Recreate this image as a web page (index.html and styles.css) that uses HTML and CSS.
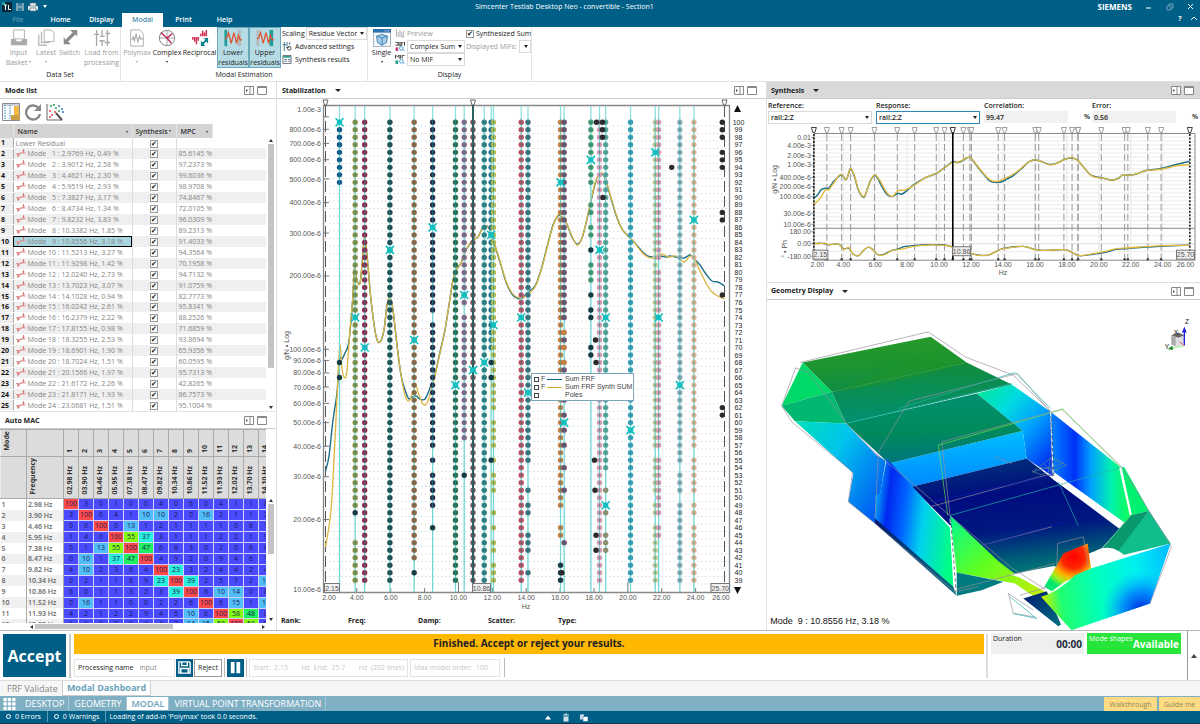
FILE: index.html
```html
<!DOCTYPE html>
<html lang="en">
<head>
<meta charset="utf-8">
<title>Simcenter Testlab Desktop Neo</title>
<link rel="stylesheet" href="styles.css">
</head>
<body>
<svg class="defs" aria-hidden="true">
  <symbol id="i-dock" viewBox="0 0 10 9"><path d="M.5.5h9v8h-9zM6 .5v8M6 .5h3.500v8H6" fill="#fff" stroke="#888" /><path d="M2 3v3l2-1.500z" fill="#555"/></symbol>
  <symbol id="i-max" viewBox="0 0 10 9"><path d="M.5.5h9v8h-9z" fill="#fff" stroke="#888"/><path d="M.5 1.500h9" stroke="#888"/></symbol>
  <symbol id="i-mode" viewBox="0 0 10 8"><path d="M0 4h5v1H0zM1 5h3v2H1zM5 3.500h5v1H5zM6.500 1h2v2.500h-2z" fill="#e9a3a3"/><path d="M2 4v4M7.500 0v4M5 5V3" fill="none" stroke="#c87474" stroke-width=".8"/></symbol>
  <symbol id="i-resid" viewBox="0 0 20 20"><path d="M1 11l2-1 2-6 3 12 3-12 3 12 2-9 2 5h2" fill="none" stroke="#e0532f" stroke-width="1.400"/></symbol>
</svg>

<header class="title-area">
  <div class="title-row">
    <div class="quick">
      <svg class="ico-10" viewBox="0 0 10 10"><path d="M0 0h10v10H0z" fill="#06283a"/><path d="M0 0h3v3H0z" fill="#17a39b"/><path d="M2 3h3M3.500 3v5M6.500 3v4.500H9" stroke="#fff" fill="none"/></svg>
      <svg class="ico-10" viewBox="0 0 10 10"><path d="M1 1h8v8H1z" fill="#7aa5b8"/><path d="M3 1h4v3H3zM3 6h4v3H3z" fill="#3b7d9c"/></svg>
      <svg class="ico-10" viewBox="0 0 10 10"><path d="M0 4h10v4H0z" fill="#dce8ee"/><path d="M2 1h6v3H2zM2 6h6v3H2z" fill="#eee" stroke="#5f7987" stroke-width=".7"/></svg>
      <span class="caret-white"></span>
    </div>
    <h1 class="title">Simcenter Testlab Desktop Neo - convertible - Section1</h1>
    <div class="window-tools"><b class="brand">SIEMENS</b>
      <button class="win" aria-label="Minimize"><svg viewBox="0 0 8 8"><path d="M1 5h5" stroke="#fff"/></svg></button>
      <button class="win" aria-label="Restore"><svg viewBox="0 0 8 8"><path d="M1 3h4v4H1zM3 3V1h4v4H5" stroke="#6fa3bd" fill="none"/></svg></button>
      <button class="win" aria-label="Close"><svg viewBox="0 0 8 8"><path d="M1 1l5 5M6 1L1 6" stroke="#fff"/></svg></button>
    </div>
  </div>
  <nav class="tab-row">
    <button class="tab tab-dim">File</button><button class="tab">Home</button><button class="tab">Display</button><button class="tab tab-active">Modal</button><button class="tab">Print</button><button class="tab">Help</button>
    <div class="help-tools"><button class="win" aria-label="Help">?</button><button class="win" aria-label="Collapse"><svg viewBox="0 0 8 8"><path d="M1 5l3-3 3 3" stroke="#fff" fill="none"/></svg></button></div>
  </nav>
</header>

<section class="ribbon">
  <div class="group">
    <div class="items">
      <button class="tool w-36 dim"><svg viewBox="0 0 20 20"><path d="M4 1h12v10H4z" fill="#fff" stroke="#aaa"/><path d="M1 11h5c1 4 7 4 8 0h5v7H1z" fill="#aaa"/></svg>Input<br>Basket <i class="car"></i></button>
      <button class="tool w-20 dim"><svg viewBox="0 0 20 20"><path d="M2 6v12h9M5 3v12h9" fill="none" stroke="#bbb" stroke-width="1.500"/><path d="M8 1h7l4 3v10H8z" fill="#fff" stroke="#aaa"/></svg>Latest<br><i class="car"></i></button>
      <button class="tool w-27 dim"><svg viewBox="0 0 20 20"><path d="M3 9v8h8l-3-3 8-8 2 2V1h-8l3 3-8 8z" fill="#8c8c8c"/></svg>Switch</button>
      <button class="tool w-37 dim"><svg viewBox="0 0 20 20"><path d="M4 1v18M10 1v6M10 14v5M16 1v18M1 6h6M7 13h6M13 15h6M8 8h5M14 5h5" stroke="#aaa" stroke-width="1.500"/></svg>Load from<br>processing</button>
    </div><div class="group-name">Data Set</div>
  </div>
  <div class="group">
    <div class="items">
      <button class="tool w-30 dim"><svg viewBox="0 0 20 20"><path d="M3 1h10l4 4v14H3z" fill="#fff" stroke="#aaa"/><path d="M4 12l2-3 1 4 2-7 2 8 2-6 1 3h3" fill="none" stroke="#aaa" stroke-width="1.300"/></svg>Polymax<br><i class="car"></i></button>
      <button class="tool w-30"><svg viewBox="0 0 20 20"><circle cx="10" cy="10" r="8.500" fill="#fff" stroke="#777"/><path d="M10 1v18M1 10h18" stroke="#999"/><path d="M10 10L3 4M10 10l6-5M10 10l5 6" stroke="#c21e56" stroke-width="1.500"/></svg>Complex<br><i class="car"></i></button>
      <button class="tool w-35"><svg viewBox="0 0 20 20"><path d="M2 12V9M4 14V9M6 17V9M8 13V9M11 8V5M13 8V2M15 8V4M17 8V1" stroke="#d02c50" stroke-width="1.600"/><path d="M11 19v-6l2 2 3-3-2-2h5v6l-2-2-3 3 2 2z" fill="#087f8c"/></svg>Reciprocal</button>
      <button class="tool w-32 on"><svg viewBox="0 0 20 20"><path d="M2 1v18" stroke="#1c9d98" stroke-width="3"/><path d="M17 1v18" stroke="#b2bcc0" stroke-width="4"/><use href="#i-resid"/></svg>Lower<br>residuals</button>
      <button class="tool w-32 on"><svg viewBox="0 0 20 20"><path d="M2 1v18" stroke="#b2bcc0" stroke-width="3"/><path d="M17 1v18" stroke="#1c9d98" stroke-width="4"/><use href="#i-resid"/></svg>Upper<br>residuals</button>
      <div class="stack">
        <label class="line line-tight">Scaling <span class="drop drop-grow"><select><option>Residue Vector</option></select></span></label>
        <button class="line"><svg class="ico-9" viewBox="0 0 10 10"><path d="M2 0v10M5 0v5M8 0v3M0 3h4M4 6h3" stroke="#356c83"/><circle cx="7.500" cy="7" r="2" fill="none" stroke="#333"/></svg>Advanced settings</button>
        <button class="line"><svg class="ico-9" viewBox="0 0 10 10"><path d="M.5.5h9v9h-9z" fill="#fff" stroke="#667"/><path d="M1 1h8v2H1z" fill="#2b9d90"/><path d="M2 5h3M6 5h3M2 7h3M6 7h3" stroke="#678"/></svg>Synthesis results</button>
      </div>
    </div><div class="group-name">Modal Estimation</div>
  </div>
  <div class="group">
    <div class="items">
      <button class="tool w-24"><svg viewBox="0 0 20 20"><path d="M.5.5h19v19H.5z" fill="#f4f7fa" stroke="#9ab"/><path d="M0 0h20v4H0z" fill="#2e6fae"/><path d="M13 2h1M15 2h1M17 2h1" stroke="#fff"/><path d="M10 6l6 2-1 7-5 3-5-3-1-7z" fill="#a5cdec" stroke="#3c79ac"/><path d="M4 8l6 2 6-2M10 10v8" fill="none" stroke="#3c79ac"/></svg>Single<br><i class="car"></i></button>
      <div class="stack stack-disp">
        <button class="line dim"><svg class="ico-9" viewBox="0 0 10 10"><path d="M1 0v9M3 3v6M5 1v8M7 3v6h2V2" fill="none" stroke="#aaa"/></svg>Preview</button>
        <label class="line"><svg class="ico-9" viewBox="0 0 10 10"><path d="M0 .5h3v3H0M4 0v4h2V0M7 4V0h3v4" fill="none" stroke="#333"/><path d="M0 6h3v4H0z" fill="#c2447a"/><circle cx="6.500" cy="7" r="2" fill="none" stroke="#39c"/><path d="M8 8l2 2" stroke="#39c"/></svg><span class="drop drop-grow"><select aria-label="Sum"><option>Complex Sum</option></select></span></label>
        <label class="line"><svg class="ico-9" viewBox="0 0 10 10"><path d="M0 4V0l2 2 2-2v4M5.500 0v4M7.500 4V.5H10" fill="none" stroke="#333"/><path d="M0 6h3v4H0z" fill="#2b9d90"/><circle cx="6.500" cy="7" r="2" fill="none" stroke="#39c"/><path d="M8 8l2 2" stroke="#39c"/></svg><span class="drop drop-grow"><select aria-label="MIF"><option>No MIF</option></select></span></label>
      </div>
      <div class="stack stack-sum">
        <label class="line"><input type="checkbox" class="check" checked> Synthesized Sum</label>
        <label class="line dim">Displayed MIFs: <span class="drop drop-tiny"><select><option></option></select></span></label>
      </div>
    </div><div class="group-name">Display</div>
  </div>
</section>

<main class="main">
  <div class="col col-left">
    <section class="panel modes">
      <header class="bar"><h2>Mode list</h2><span class="bar-tools"><svg><use href="#i-dock"/></svg><svg><use href="#i-max"/></svg></span></header>
      <div class="mode-tools">
        <button aria-label="Columns"><svg viewBox="0 0 18 18"><path d="M.5.5h17v17H.5z" fill="#fff" stroke="#889"/><path d="M1 1h16v2H1z" fill="#cdd3d8"/><path d="M3 2v14M8 2v14" stroke="#2f7ac0" stroke-dasharray="1.500 1"/><path d="M12 3h5v9h-5z" fill="#f4b942"/><path d="M9 12h9v5H9z" fill="#caa04a"/></svg></button>
        <button aria-label="Refresh"><svg viewBox="0 0 18 18"><path d="M14.500 5A7 7 0 1 0 16 11" fill="none" stroke="#888" stroke-width="2.400"/><path d="M17 1v7h-7z" fill="#888"/></svg></button>
        <button aria-label="Select poles"><svg viewBox="0 0 18 18"><path d="M1 1v16h15" fill="none" stroke="#666"/><g fill="#2a9d55"><circle cx="5" cy="3" r="1"/><circle cx="8" cy="2" r="1"/><circle cx="10" cy="5" r="1"/><circle cx="13" cy="8" r="1"/></g><g fill="#d64045"><circle cx="4" cy="8" r="1"/><circle cx="6" cy="12" r="1"/><circle cx="9" cy="9" r="1"/><circle cx="4" cy="14" r="1"/></g><g fill="#2f6fc0"><circle cx="13" cy="3" r="1"/><circle cx="16" cy="6" r="1"/><circle cx="17" cy="9" r="1"/></g><path d="M10 10l6 7" stroke="#555" stroke-width="2"/></svg></button>
      </div>
      <div class="scroller">
        <div class="clip">
          <table class="mode-table">
            <colgroup><col class="c-num"><col class="c-name"><col class="c-syn"><col class="c-mpc"><col></colgroup>
            <thead><tr><th></th><th>Name<i class="car car-r"></i></th><th>Synthesis <i class="car"></i></th><th>MPC<i class="car car-r"></i></th><td></td></tr></thead>
            <tbody id="modes"></tbody>
          </table>
        </div>
        <div class="vbar vbar-modes"><i class="up"></i><i class="thumb thumb-modes"></i><i class="down"></i></div>
      </div>
    </section>
    <section class="panel mac">
      <header class="bar"><h2>Auto MAC</h2><span class="bar-tools"><svg><use href="#i-dock"/></svg><svg><use href="#i-max"/></svg></span></header>
      <div class="scroller">
        <div class="clip">
          <table class="mac-table"><colgroup id="macCols"><col class="c-mode"><col class="c-freq"></colgroup><thead id="macHead"></thead><tbody id="macBody"></tbody></table>
        </div>
        <div class="vbar vbar-mac"><i class="up"></i><i class="thumb thumb-mac"></i><i class="down"></i></div>
      </div>
      <div class="hbar"><i class="left"></i><i class="hthumb"></i><i class="right"></i></div>
    </section>
  </div>

  <section class="col panel stab">
    <header class="bar"><h2>Stabilization</h2><i class="car car-big"></i><span class="bar-tools"><svg><use href="#i-dock"/></svg><svg><use href="#i-max"/></svg></span></header>
    <div class="chart-box">
      <svg class="chart" id="stab" viewBox="277 99 489 514" role="img" aria-label="Stabilization diagram"></svg>
      <div class="legend">
        <label><input type="checkbox" class="box"><span>F</span><i class="key key-blue"></i><span>Sum FRF</span></label>
        <label><input type="checkbox" class="box"><span>F</span><i class="key key-gold"></i><span>Sum FRF Synth SUM</span></label>
        <label><input type="checkbox" class="box"><span></span><i class="key"></i><span>Poles</span></label>
      </div>
    </div>
    <div class="readout"><b>Rank:</b><b>Freq:</b><b>Damp:</b><b>Scatter:</b><b>Type:</b></div>
  </section>

  <div class="col col-right">
    <section class="panel synth">
      <header class="bar bar-grey"><h2>Synthesis</h2><i class="car car-big"></i><span class="bar-tools"><svg><use href="#i-dock"/></svg><svg><use href="#i-max"/></svg></span></header>
      <div class="fields">
        <label>Reference:<span class="drop"><select><option>rail:2:Z</option></select></span></label>
        <label>Response:<span class="drop drop-focus"><select><option>rail:2:Z</option></select></span></label>
        <label>Correlation:<span class="with-unit"><input readonly value="99.47"><span>%</span></span></label>
        <label>Error:<span class="with-unit"><input readonly value="0.56"><span>%</span></span></label>
      </div>
      <svg class="chart" id="synth" viewBox="767 125 433 157" role="img" aria-label="Synthesis chart"></svg>
    </section>
    <section class="panel geo">
      <header class="bar"><h2>Geometry Display</h2><i class="car car-big"></i><span class="bar-tools"><svg><use href="#i-dock"/></svg><svg><use href="#i-max"/></svg></span></header>
      <svg class="chart" viewBox="6 45 1299 990" role="img" aria-label="Mode shape">
        <defs>
          <linearGradient id="g1" x1=".4" y1="0" x2=".55" y2="1"><stop offset="0" stop-color="#289a28"/><stop offset=".5" stop-color="#1c9430"/><stop offset="1" stop-color="#0c8c48"/></linearGradient>
          <linearGradient id="g2" x1=".5" y1="0" x2=".6" y2="1"><stop offset="0" stop-color="#128c3c"/><stop offset="1" stop-color="#009074"/></linearGradient>
          <linearGradient id="g3" x1=".5" y1="0" x2=".55" y2="1"><stop offset="0" stop-color="#009070"/><stop offset=".55" stop-color="#008a5c"/><stop offset="1" stop-color="#007480"/></linearGradient>
          <linearGradient id="g4" x1="0" y1="0" x2="1" y2=".7"><stop offset="0" stop-color="#00e0b8"/><stop offset=".45" stop-color="#00c4ec"/><stop offset="1" stop-color="#0060f4"/></linearGradient>
          <linearGradient id="g5" x1="0" y1="0" x2=".9" y2=".9"><stop offset="0" stop-color="#00e890"/><stop offset=".35" stop-color="#00dce0"/><stop offset=".65" stop-color="#00a0ff"/><stop offset="1" stop-color="#0030f0"/></linearGradient>
          <linearGradient id="g6" x1="0" y1="0" x2=".1" y2="1"><stop offset="0" stop-color="#00c4ff"/><stop offset="1" stop-color="#0088ff"/></linearGradient>
          <linearGradient id="g7" x1="0" y1=".4" x2="1" y2=".6"><stop offset="0" stop-color="#00a0f8"/><stop offset=".15" stop-color="#0028f0"/><stop offset=".35" stop-color="#0060ff"/><stop offset=".6" stop-color="#00d0f0"/><stop offset="1" stop-color="#00ff80"/></linearGradient>
          <linearGradient id="g8" x1=".4" y1="0" x2=".6" y2="1"><stop offset="0" stop-color="#003078"/><stop offset=".3" stop-color="#000c80"/><stop offset=".6" stop-color="#001880"/><stop offset=".85" stop-color="#006078"/><stop offset="1" stop-color="#008078"/></linearGradient>
          <linearGradient id="g9" x1="0" y1=".4" x2="1" y2=".4"><stop offset="0" stop-color="#0088ff"/><stop offset=".3" stop-color="#0030f8"/><stop offset=".5" stop-color="#00a0ff"/><stop offset=".75" stop-color="#00f0b0"/><stop offset="1" stop-color="#10ff50"/></linearGradient>
          <linearGradient id="g10" x1="0" y1="0" x2="1" y2="1"><stop offset="0" stop-color="#00f890"/><stop offset=".4" stop-color="#60ff20"/><stop offset="1" stop-color="#f4e400"/></linearGradient>
          <linearGradient id="g11" x1="0" y1=".5" x2="1" y2=".4"><stop offset="0" stop-color="#c8f000"/><stop offset=".14" stop-color="#20ff70"/><stop offset=".45" stop-color="#00ffc0"/><stop offset=".75" stop-color="#00f0f0"/><stop offset="1" stop-color="#00c0ff"/></linearGradient>
          <radialGradient id="g12" cx="1130" cy="975" r="120" gradientUnits="userSpaceOnUse"><stop offset="0" stop-color="#0020e0"/><stop offset=".5" stop-color="#0080ff" stop-opacity=".8"/><stop offset="1" stop-color="#00c0ff" stop-opacity="0"/></radialGradient>
          <radialGradient id="g13" cx="925" cy="815" r="100" gradientUnits="userSpaceOnUse"><stop offset="0" stop-color="#ff0000"/><stop offset=".35" stop-color="#ff2800"/><stop offset=".6" stop-color="#ffb000"/><stop offset=".8" stop-color="#a0f020"/><stop offset="1" stop-color="#00e870"/></radialGradient>
          <linearGradient id="g14" x1="0" y1="0" x2="1" y2="1"><stop offset="0" stop-color="#001870"/><stop offset="1" stop-color="#007080"/></linearGradient>
        </defs>
        <path d="M740 298L857 380L865 575L785 520L773 437L635 325z" fill="url(#g5)"/>
        <path d="M372 535L773 437L785 520L440 605z" fill="url(#g6)"/>
        <path d="M440 605L785 520L868 585L1065 728L1010 790L870 845L735 872L555 720z" fill="url(#g8)"/>
        <path d="M243 415L635 325L773 437L372 535z" fill="url(#g3)"/>
        <path d="M113 232L497 155L605 232L200 320z" fill="url(#g1)"/>
        <path d="M200 320L605 232L740 298L243 415z" fill="url(#g2)"/>
        <path d="M200 320C360 300 480 270 605 232L497 200C400 250 280 290 200 320z" fill="#209428" opacity=".5"/>
        <path d="M113 232L200 320L50 362z" fill="#00d868"/>
        <path d="M50 362L200 320L243 415L90 408z" fill="#00b870"/>
        <path d="M90 408L243 415L335 510L362 525L345 630L330 715L250 650L265 565z" fill="url(#g4)"/>
        <path d="M365 520L555 728L565 905L330 705L332 630L345 625z" fill="url(#g7)"/>
        <path d="M330 700L565 905L575 932L330 715z" fill="url(#g14)"/>
        <path d="M857 380L1065 545L1098 690L1070 722L865 560z" fill="url(#g9)"/>
        <path d="M865 560L1078 712L1062 730L865 582z" fill="#fff"/>
        <path d="M1065 545L1078 546L1152 677L1100 690z" fill="#00f070"/>
        <path d="M1062 547L1070 547L1100 686L1094 690z" fill="#fff"/>
        <path d="M1098 690L1152 677L1065 800L1012 790z" fill="#08986c"/>
        <path d="M1152 677L1217 775L1065 812L1060 797z" fill="#10bd8c"/>
        <path d="M975 815Q1000 780 1045 790Q1080 805 1085 822L978 850z" fill="#fff"/>
        <path d="M555 690L700 828L765 878L850 925L860 955L885 995L830 950L750 895L575 862z" fill="url(#g10)"/>
        <path d="M575 862L715 890L650 915L575 932z" fill="#007c80"/>
        <path d="M775 940L845 918L888 1018L880 1023z" fill="url(#g14)"/>
        <path d="M735 868L870 842L835 908L790 885z" fill="#fff"/>
        <path d="M838 905L895 805L968 775L978 850L900 890L860 918z" fill="url(#g13)"/>
        <path d="M828 935Q880 920 930 870L978 850L1217 775L1155 955L920 1035L878 990z" fill="url(#g11)"/>
        <path d="M1217 775L1155 955L920 1035L1000 900z" fill="url(#g12)"/>
        <g fill="none" stroke="#998c9c" stroke-width="2">
          <path d="M105 232L490 140L600 215L745 270L857 378M50 362L92 248L130 262L245 415L335 508L420 575L555 692L740 848L840 912M50 362L82 412L263 560L250 650L330 715L570 920L640 905"/>
          <path d="M335 510L432 348L758 265L857 380L862 575M330 700L340 510M555 690L530 470L890 372L1070 545L1152 677L1219 785L1155 955M495 665L860 565M650 780L860 725M875 850L878 775L955 755L970 845M575 912L870 835M730 925L805 975M730 925L745 985L810 995M690 515L740 535M765 930L850 905"/>
        </g>
        <g fill="none" stroke="#20b0a8" stroke-width="2">
          <path d="M243 415L740 295M400 370L750 262L857 370M558 690L1065 548M880 590L940 722M735 935L815 1000L745 985"/>
          <path d="M802 560L862 515L905 540L830 568L802 560L895 535L855 520L850 560M820 545L880 555M835 535L870 565" stroke="#508898"/>
          <path d="M520 480L895 372M520 480L548 690M892 370L1065 545" stroke="#70e048"/>
          <path d="M500 650L860 570M650 780L900 710" stroke="#1020b0"/>
        </g>
        <path d="M555 700L575 930M857 380L865 578" stroke="#fff" stroke-width="3" stroke-dasharray="14 5"/>
        <path d="M557 700L573 920M860 400L866 575" stroke="#234" stroke-width="2" stroke-dasharray="10 8"/>
        <g><path d="M1219 150L1240 142L1258 150L1258 176L1240 185L1219 178z" fill="#ddd"/><path d="M1219 150L1240 142L1258 150L1240 158z" fill="#666"/><path d="M1219 150L1219 178L1232 184L1232 156z" fill="#aaa"/><path d="M1258 180V135" stroke="#2020e0" stroke-width="4"/><path d="M1251 142L1258 124L1265 142z" fill="#2020e0"/><path d="M1258 182L1215 190" stroke="#60e060" stroke-width="2"/><path d="M1222 182L1208 192L1224 194z" fill="#108020"/><path d="M1258 182L1244 170" stroke="#e02020" stroke-width="2"/></g>
        <g class="axis-names"><text x="1260" y="116">Z</text><text x="1226" y="148">X</text><text x="1199" y="192">Y</text></g>
        <text class="shape-name" x="16" y="1016" xml:space="preserve">Mode  9 : 10.8556 Hz, 3.18 %</text>
      </svg>
    </section>
  </div>
</main>

<section class="actions">
  <button class="accept">Accept</button>
  <div class="work">
    <div class="banner">Finished. Accept or reject your results.</div>
    <div class="params">
      <label class="framed framed-name">Processing name <input value="input"></label>
      <button class="square" aria-label="Save"><svg viewBox="0 0 16 16"><path d="M2 2h11l1 1v11H2z" fill="none" stroke="#fff" stroke-width="1.500"/><path d="M5 2v4h6V2M4 14V9h8v5" fill="none" stroke="#fff" stroke-width="1.500"/></svg></button>
      <button class="reject">Reject</button><i class="split"></i>
      <button class="square" aria-label="Pause"><svg viewBox="0 0 16 16"><path d="M3 2h4v12H3zM9 2h4v12H9z" fill="#fff"/></svg></button><i class="split"></i>
      <div class="framed faint framed-range"><span>Start:&nbsp; 2.15</span><span>Hz&nbsp; End:&nbsp; 25.7</span><span>Hz&nbsp; (202 lines)</span></div>
      <div class="framed faint framed-order">Max model order:&nbsp; 100</div><i class="split"></i>
    </div>
  </div>
  <div class="state">
    <div class="tile"><span>Duration</span><b>00:00</b></div>
    <div class="tile tile-green"><span>Mode shapes</span><b>Available</b></div>
  </div>
  <button class="expand" aria-label="Expand"><i></i></button>
</section>

<nav class="doc-tabs"><a href="#">FRF Validate</a><a href="#" class="current">Modal Dashboard</a></nav>
<nav class="spaces">
  <svg class="grid-ico" viewBox="0 0 13 13"><path d="M0 0h3.500v3.500H0zM4.700 0h3.500v3.500H4.700zM9.400 0H13v3.500H9.400zM0 4.700h3.500v3.500H0zM4.700 4.700h3.500v3.500H4.700zM9.400 4.700H13v3.500H9.400zM0 9.400h3.500V13H0zM4.700 9.400h3.500V13H4.700zM9.400 9.400H13V13H9.400z" fill="#fff"/></svg>
  <a href="#">DESKTOP</a><a href="#">GEOMETRY</a><a href="#" class="current">MODAL</a><a href="#">VIRTUAL POINT TRANSFORMATION</a>
  <span class="guides"><button>Walkthrough</button><button>Guide me</button></span>
</nav>
<footer class="status">
  <div class="status-l"><span><i class="ring"></i>0 Errors</span><span><i class="ring"></i>0 Warnings</span><span>Loading of add-in 'Polymax' took 0.0 seconds.</span></div>
  <div class="status-r">
    <svg viewBox="0 0 8 8"><path d="M1 6h6L4 2z" fill="#fff"/></svg>
    <svg viewBox="0 0 8 8"><path d="M1 1h6v1H1zM3 0h2v1H3zM1.500 3h5v5h-5z" fill="#cfe0e8"/></svg>
    <svg viewBox="0 0 8 8"><path d="M0 1h4v5H0z" fill="#cfe0e8"/><path d="M3 3h5v5H3z" fill="#fff" stroke="#005f87" stroke-width=".5"/></svg>
  </div>
</footer>
<script src="app.js"></script>
</body>
</html>
```
FILE: styles.css
```css
* { box-sizing: border-box; }
html, body { height: 100%; }
body { margin: 0; display: flex; flex-direction: column; font: 7px/10px "Open Sans", "Noto Sans", sans-serif; color: #222; background: #fff; overflow: hidden; }
button, input, select { font: inherit; color: inherit; background: none; border: 0; padding: 0; margin: 0; border-radius: 0; }
h1, h2 { margin: 0; font-size: 7px; font-weight: 400; }
a { color: inherit; text-decoration: none; }
i { display: inline-block; font-style: normal; }
.defs { position: absolute; width: 0; height: 0; }

.title-area { background: #005f87; color: #fff; flex: none; }
.title-row { display: grid; grid-template-columns: 1fr auto 1fr; height: 13px; align-items: center; padding-right: 5px; }
.quick { display: flex; gap: 3px; align-items: center; padding-left: 2px; }
.ico-10 { width: 10px; height: 10px; }
.caret-white { border: 2px solid transparent; border-top: 3px solid #fff; border-bottom: 0; margin-left: 2px; }
.title { margin-right: 66px; }
.window-tools { display: flex; justify-content: flex-end; align-items: center; gap: 13px; }
.brand { font-size: 8px; }
.win { width: 8px; height: 10px; font-weight: 700; line-height: 10px; }
.win svg { width: 8px; height: 8px; display: block; }
.tab-row { display: flex; height: 14px; }
.tab { width: 41px; height: 14px; font-weight: 600; line-height: 14px; }
.tab-dim { width: 40px; padding-right: 4px; color: #6fa3bd; font-weight: 400; }
.tab-active { background: #fff; color: #4d8ca8; }
.help-tools { margin-left: auto; display: flex; gap: 6px; padding: 1px 2px 0 0; }

.ribbon { display: flex; height: 55px; flex: none; border-bottom: 1px solid #e2e2e2; }
.group { display: flex; flex-direction: column; border-right: 1px solid #e4e4e4; }
.items { display: flex; align-items: flex-start; flex: 1; padding-left: 1px; }
.group-name { text-align: center; height: 12px; line-height: 10px; padding-top: 1px; }
.tool { display: block; text-align: center; padding-top: 2px; white-space: nowrap; line-height: 10px; }
.tool svg { width: 18px; height: 18px; display: block; margin: 0 auto 1px; }
.w-20 { width: 20px; } .w-24 { width: 25px; } .w-27 { width: 27px; } .w-30 { width: 30px; } .w-32 { width: 32px; } .w-35 { width: 35px; } .w-36 { width: 35px; } .w-37 { width: 37px; }
.on { background: #b5dbe5; border: 1px solid #6ba7bb; padding-top: 1px; height: 41px; }
.dim { color: #9a9a9a; }
.car { border: 1px solid transparent; border-top: 2px solid currentColor; border-bottom: 0; width: 0; vertical-align: 2px; }
.car-big { border-width: 3px 3px 0; border-top-color: #222; margin-left: 9px; }
.stack { display: flex; flex-direction: column; width: 86px; padding-left: 1px; }
.line { display: flex; align-items: center; gap: 3px; height: 13px; text-align: left; white-space: nowrap; }
.line-tight { gap: 1px; }
.ico-9 { width: 10px; height: 9px; flex: none; }
.stack-disp { width: 71px; } .stack-sum { width: 66px; }
.stack-disp .line { gap: 2px; }
.stack-sum .line { gap: 2px; }
.drop { position: relative; display: block; border: 1px solid #dadada; }
.drop-grow { flex: 1; }
.drop select { appearance: none; width: 100%; height: 11px; display: block; padding-left: 2px; line-height: 11px; }
.drop::after { content: ""; position: absolute; right: 2px; top: 4px; border: 2px solid transparent; border-top: 3px solid #222; border-bottom: 0; pointer-events: none; }
.drop-tiny { width: 14px; }
.check { appearance: none; width: 8px; height: 8px; border: 1px solid #9a9a9a; background: #fff; display: inline-block; vertical-align: middle; }
.check:checked::before { content: "✔"; display: block; font: 7px/6px "DejaVu Sans", sans-serif; color: #111; text-align: center; }

.main { flex: 1; min-height: 0; display: grid; grid-template-columns: 277fr 490fr 433fr; }
.col { min-width: 0; min-height: 0; display: flex; flex-direction: column; }
.panel { min-height: 0; min-width: 0; display: flex; flex-direction: column; }
.col-left { border-right: 1px solid #e0e0e0; }
.stab { border-right: 1px solid #e0e0e0; }
.modes { flex: 330; } .mac { flex: 218; border-top: 1px solid #e4e4e4; }
.bar { height: 17px; flex: none; display: flex; align-items: center; border-bottom: 1px solid #ccc; padding: 1px 9px 0 5px; }
.bar h2 { font-weight: 700; }
.bar-grey { background: #d9d9d9; }
.bar-tools { margin-left: auto; display: flex; gap: 3px; }
.bar-tools svg { width: 10px; height: 9px; }
.mode-tools { height: 25px; flex: none; display: flex; gap: 4px; align-items: center; padding: 0 2px; }
.mode-tools svg { width: 18px; height: 18px; display: block; }
.scroller { flex: 1; min-height: 0; display: flex; }
.clip { flex: 1; min-width: 0; overflow: hidden; position: relative; }
table { border-collapse: collapse; table-layout: fixed; }
td, th { padding: 0; white-space: nowrap; line-height: 9px; text-align: left; }

.mode-table { width: 100%; height: 100%; color: #848484; }
.mode-table th { background: #d4d4d4; color: #333; height: 14px; padding-left: 4px; font-weight: 600; border-right: 1px solid #e6e6e6; }
.mode-table thead th:nth-child(3) { padding-left: 3px; }
.mode-table tbody tr:nth-child(even) { background: #efefef; }
.mode-table tbody th { height: 9px; padding-left: 1px; color: #111; background: #eee; font-weight: 700; border-bottom: 1px solid #fff; border-right: 1px solid #aaa; }
.mode-table tbody td:nth-child(2) { padding-left: 2px; border-right: 1px solid #ddd; }
.mode-table tbody td:nth-child(3) { text-align: center; border-right: 1px solid #ddd; }
.mode-table tbody td:nth-child(4) { padding-left: 2px; }
.mode-table .picked-cell { background: #aad6df; outline: 1px solid #000; outline-offset: -1px; }
.mode-ico { width: 10px; height: 8px; vertical-align: -1px; margin-right: 2px; }
.name { white-space: pre; }
.mode-table .check { vertical-align: top; margin-top: 1px; }
.car-r { float: right; margin: 4px 4px 0 0; }
.c-num { width: 13px; } .c-name { width: 119px; } .c-syn { width: 44px; } .c-mpc { width: 36px; }
.vbar { width: 10px; display: flex; flex-direction: column; align-items: center; gap: 2px; padding: 0 0 2px; flex: none; }
.vbar-modes { padding-top: 15px; } .vbar-mac { padding-top: 70px; }
.up, .down { border: 2px solid transparent; }
.up { border-bottom: 3px solid #333; border-top: 0; } .down { border-top: 3px solid #333; border-bottom: 0; margin-top: auto; }
.thumb { width: 6px; background: #c4c4c4; }
.thumb-modes { flex: 0 1 224px; } .thumb-mac { flex: 0 1 50px; }
.hbar { height: 7px; display: flex; align-items: center; gap: 2px; padding: 0 11px 0 30px; flex: none; }
.left, .right { border: 2px solid transparent; }
.left { border-right: 3px solid #333; border-left: 0; } .right { border-left: 3px solid #333; border-right: 0; margin-left: auto; }
.hthumb { width: 138px; height: 5px; background: #c4c4c4; }

.mac-table { width: 274px; height: 201px; }
.c-mode { width: 26px; } .c-freq { width: 37px; }
.mac-table thead th { background: #dcdcdc; border: 1px solid #aaa; border-left-color: #eee; vertical-align: bottom; font-weight: 700; color: #333; }
.mac-table thead tr:first-child th { height: 27px; } .mac-table thead tr:last-child th { height: 41px; }
.mac-table thead th.top { vertical-align: top; }
.side { writing-mode: vertical-rl; transform: rotate(180deg); display: inline-block; margin: 1px 1px; line-height: 10px; }
.mac-table tbody th { font-weight: 600; color: #666; padding-left: 1px; border-right: 1px solid #aaa; }
.mac-table tbody tr:nth-child(even) th { background: #f0f0f0; }
.mac-table tbody td { text-align: center; border: 1px solid #d2d2ff; color: #1a1a50; line-height: 8px; }
.v0 { background: #4a4aff; } .v1 { background: #50bcf8; } .v2 { background: #28f0dc; } .v3 { background: #20f060; } .v4 { background: #84ff10; } .v5 { background: #ff4a4a; }

.chart-box { flex: 1; min-height: 0; position: relative; display: flex; }
.chart { flex: 1; min-height: 0; width: 100%; display: block; }
.chart text { font: 7px "Liberation Sans", Arial, sans-serif; fill: #555; }
.chart .rank { fill: #222; }
.chart .end { text-anchor: end; } .chart .mid { text-anchor: middle; }
.chart .shape-name { font-size: 27px; fill: #111; }
.chart .axis-names text { font-size: 20px; fill: #111; }
.legend { position: absolute; left: 254px; top: 274px; width: 103px; height: 28px; background: #fff; border: 1px solid #7aa5b8; padding: 1px 2px; font: 7px/8px "Liberation Sans", Arial, sans-serif; color: #444; }
.legend label { display: grid; grid-template-columns: 7px 6px 18px 1fr; align-items: center; height: 8px; white-space: nowrap; }
.box { appearance: none; width: 5px; height: 5px; border: 1px solid #444; }
.key { height: 1px; width: 15px; } .key-blue { background: #006a8c; } .key-gold { background: #dcae2c; }
.readout { height: 17px; flex: none; display: grid; grid-template-columns: 67px repeat(4, 70px); padding: 3px 0 0 4px; }

.synth { flex: 200; } .geo { flex: 348; border-top: 1px solid #ddd; }
.col-right .bar { padding-left: 4px; padding-right: 6px; }
.fields { display: grid; grid-template-columns: repeat(4, 1fr); flex: none; height: 26px; font-weight: 600; padding-left: 1px; }
.fields label { line-height: 11px; padding-right: 2px; padding-top: 1px; }
.fields .drop { margin-right: 2px; }
.fields .drop-focus { border-color: #2f86b8; }
.with-unit { display: grid; grid-template-columns: 84px 1fr; }
.with-unit input { width: 84px; height: 12px; background: #f1f1f1; padding-left: 2px; }
.with-unit span { text-align: right; }

.actions { height: 51px; flex: none; display: flex; border-top: 1px solid #bbb; border-bottom: 1px solid #ddd; padding: 3px 0 2px 3px; }
.accept { width: 63px; background: #005f87; color: #fff; font-size: 16px; font-weight: 700; margin-right: 3px; height: 43px; }
.work { flex: 1; border-left: 2px solid #ccc; border-right: 2px solid #ddd; padding: 0 2px 0 3px; }
.banner { height: 20px; background: #ffb800; text-align: center; font-size: 10px; line-height: 19px; font-weight: 700; }
.params { display: flex; gap: 1px; margin-top: 4px; height: 19px; align-items: center; }
.framed { height: 18px; border: 1px solid #e4e4e4; display: flex; align-items: center; padding: 0 3px; gap: 6px; }
.framed-name { width: 101px; white-space: nowrap; } .framed-name input { width: 34px; color: #888; }
.faint { color: #c8c8c8; }
.framed-range { width: 159px; justify-content: space-between; white-space: nowrap; } .framed-order { width: 90px; white-space: nowrap; margin: 0 2px 0 1px; }
.square { width: 17px; height: 18px; background: #005f87; } .square svg { width: 15px; height: 15px; display: block; margin: auto; }
.reject { width: 28px; height: 18px; border: 1px solid #999; }
.split { width: 1px; height: 19px; background: #bbb; margin: 0 1px; }
.state { display: grid; grid-template-columns: 93px 94px; gap: 3px; padding: 0 6px 0 3px; border-right: 1px solid #999; margin: -3px 0 -2px; padding-top: 2px; }
.tile { height: 21px; background: #efefef; display: flex; justify-content: space-between; padding: 1px 2px; white-space: nowrap; }
.tile b { font-size: 10px; line-height: 21px; color: #1b2a3a; }
.tile-green { background: #27e53a; color: #fff; } .tile-green b { color: #fff; }
.expand { width: 12px; } .expand i { border: 3px solid transparent; border-bottom: 4px solid #444; border-top: 0; }

.doc-tabs { height: 15px; flex: none; display: flex; background: #f6f6f6; font-size: 9px; line-height: 15px; color: #888; }
.doc-tabs a { padding: 0 4px; } .doc-tabs a:first-child { padding-left: 7px; }
.doc-tabs .current { background: #fff; border: 1px solid #ccc; border-top: 0; color: #6ba3b9; font-weight: 700; line-height: 14px; }
.spaces { height: 15px; flex: none; display: flex; background: #7fafc3; color: #fff; font-size: 9px; line-height: 15px; }
.grid-ico { width: 13px; height: 12px; margin: 2px 4px 0 3px; }
.spaces a { padding: 0 4px 0 5px; border-right: 1px solid #a6c8d5; height: 13px; line-height: 13px; margin-top: 1px; }
.spaces .current { background: #fff; color: #6ba3b9; font-weight: 600; }
.guides { margin-left: auto; display: flex; gap: 2px; padding-top: 1px; }
.guides button { background: #ffdc84; color: #8a855f; font-size: 7px; height: 14px; width: 53px; } .guides button:last-child { width: 41px; }
.status { height: 13px; flex: none; background: #005f87; border-bottom: 1px solid #1a3546; color: #fff; display: flex; line-height: 12px; }
.status-l { display: flex; flex: 0 0 45%; } .status-l span { padding: 0 6px; border-right: 1px solid #5c9ab5; height: 11px; }
.status-l span:last-child { border: 0; padding-left: 3px; }
.ring { width: 5px; height: 5px; border: 1px solid #fff; border-radius: 3px; margin-right: 4px; }
.status-r { display: flex; gap: 10px; align-items: center; padding-left: 4px; } .status-r svg { width: 8px; height: 9px; }
```
FILE: app.js
```js
const modes = [
  [2.9769, 0.49, 85.6145], [3.9012, 2.58, 97.2373], [4.4621, 2.30, 99.6036], [5.9519, 2.93, 98.9708],
  [7.3827, 3.17, 74.8467], [8.4734, 1.34, 72.0105], [9.8232, 3.83, 96.0309], [10.3382, 1.85, 89.2313],
  [10.8556, 3.18, 91.4033], [11.5213, 3.27, 94.3564], [11.9298, 1.42, 70.1958], [12.0240, 2.73, 94.7132],
  [13.7023, 3.07, 91.0759], [14.1028, 0.94, 82.7773], [16.0242, 2.61, 95.8341], [16.2379, 2.22, 88.2526],
  [17.8155, 0.98, 71.6859], [18.3255, 2.53, 93.8694], [18.6901, 1.90, 65.9356], [18.7024, 1.51, 60.0595],
  [20.1566, 1.97, 95.7313], [21.6172, 2.26, 42.8265], [21.8171, 1.93, 86.7573], [23.0681, 1.51, 95.1004]
];
const $ = id => document.getElementById(id);
const check = n => `<input type="checkbox" class="check" checked aria-label="Synthesis ${n}">`;

$('modes').innerHTML = `<tr><th>1</th><td>Lower Residual</td><td>${check(1)}</td><td></td><td></td></tr>` +
  modes.map(([f, d, m], i) => `<tr><th>${i + 2}</th><td class="${i === 8 ? 'picked-cell' : ''}"><svg class="mode-ico"><use href="#i-mode"/></svg><span class="name">Mode ${String(i + 1).padStart(2, '\u2007')} : ${f.toFixed(4)} Hz, ${d.toFixed(2)} %</span></td><td>${check(i + 2)}</td><td>${m.toFixed(4)} %</td><td></td></tr>`).join('');

const mac = [
  [100, 3, 0, 1, 0, 0, 4, 0, 6, 0, 4, 1, 1, 8], [3, 100, 0, 4, 1, 10, 10, 2, 0, 16, 2, 1, 1, 2],
  [0, 0, 100, 0, 13, 1, 2, 1, 1, 1, 1, 0, 6, 1], [1, 4, 0, 100, 55, 37, 3, 1, 1, 1, 2, 2, 1, 9],
  [0, 1, 13, 55, 100, 47, 6, 8, 3, 0, 2, 0, 6, 8], [0, 10, 1, 37, 47, 100, 4, 9, 2, 0, 9, 4, 6, 1],
  [4, 10, 2, 3, 6, 4, 100, 23, 3, 2, 4, 4, 2, 4], [0, 2, 1, 1, 8, 9, 23, 100, 39, 2, 5, 7, 2, 11],
  [6, 0, 1, 1, 3, 2, 3, 39, 100, 6, 10, 14, 0, 8], [0, 16, 1, 1, 0, 0, 2, 2, 6, 100, 6, 15, 1, 11],
  [4, 2, 1, 2, 2, 9, 4, 5, 10, 6, 100, 58, 48, 8], [1, 1, 0, 2, 0, 4, 4, 7, 14, 15, 58, 100, 58, 8]
];
const shade = v => v < 10 ? 0 : v < 20 ? 1 : v < 40 ? 2 : v < 50 ? 3 : v < 90 ? 4 : 5;
const cols = modes.slice(0, 14);
const side = t => `<span class="side">${t}</span>`;
$('macCols').innerHTML += cols.map(() => '<col>').join('');
$('macHead').innerHTML = `<tr><th class="top">${side('Mode')}</th><th></th>${cols.map((c, i) => `<th>${side(i + 1)}</th>`).join('')}</tr>` +
  `<tr><th></th><th>${side('Frequency')}</th>${cols.map(c => `<th>${side(c[0].toFixed(2).padStart(5, '0') + ' Hz')}</th>`).join('')}</tr>`;
$('macBody').innerHTML = mac.map((r, i) => `<tr><th>${i + 1}</th><th>${modes[i][0].toFixed(2)} Hz</th>${r.map(v => `<td class="v${shade(v)}">${v}</td>`).join('')}</tr>`).join('');

const line = (x1, y1, x2, y2, c, w = 1, extra = '') => `<line x1="${x1}" y1="${y1}" x2="${x2}" y2="${y2}" stroke="${c}" stroke-width="${w}" ${extra}/>`;
const text = (x, y, t, cls = '') => `<text x="${x}" y="${y}" class="${cls}">${t}</text>`;
const flag = (x, y, c = '#444') => `<path d="M${x - 2.5} ${y}h5L${x + 1} ${y + 5}h-2z" fill="#fff" stroke="${c}" stroke-width=".8"/>`;
const tag = (x, y, w, t) => `<rect x="${x}" y="${y}" width="${w}" height="9" fill="#f0f0f0" fill-opacity=".9" stroke="#777"/>` + text(x + w / 2, y + 7, t, 'mid');
function smooth(p) {
  let d = `M${p[0]}`;
  for (let i = 0; i < p.length - 1; i++) {
    const a = p[i - 1] || p[i], b = p[i], c = p[i + 1], e = p[i + 2] || c;
    d += `C${b[0] + (c[0] - a[0]) / 6} ${b[1] + (c[1] - a[1]) / 6} ${c[0] - (e[0] - b[0]) / 6} ${c[1] - (e[1] - b[1]) / 6} ${c[0]} ${c[1]}`;
  }
  return d;
}
const curve = (s, c, w) => `<path d="${smooth(s.trim().split(/\s+/).map(q => q.split(',').map(Number)))}" fill="none" stroke="${c}" stroke-width="${w}" stroke-linejoin="round"/>`;

/* Stabilization diagram */
{
  const X = f => 325.5 + (f - 2.15) * 16.94;
  const Y = n => 122.3 + (100 - n) * 7.508;
  const L = v => 349.3 - Math.log10(v / 100) * 243.6;
  const cyan = '#12c0c0', dark = '#2b2b2e';
  let s = '';
  for (let n = 100; n >= 39; n--) s += line(325, Y(n) + 3.7, 729, Y(n) + 3.7, n % 2 ? '#e8d4d8' : '#cfe0e6', 1, 'stroke-dasharray="1.5 2.5"');
  s += `<path d="M323.500 592.500V105.500H729.500V592.500z" fill="none" stroke="#888" stroke-width="1.3"/>`;
  s += line(325.5, 106, 325.5, 592, '#555', 1, 'stroke-dasharray="11 4"') + line(724.5, 106, 724.5, 592, '#555', 1, 'stroke-dasharray="11 4"');
  for (const v of [900, 800, 700, 600, 500, 400, 300, 200, 100, 90, 80, 70, 60, 50, 40, 30, 20]) {
    s += line(323, L(v), 329, L(v), '#777');
    if (v !== 900) s += text(321, L(v) + 2.5, v.toFixed(2) + 'e-6', 'end');
  }
  s += text(321, 112, '1.00e-3', 'end') + text(321, 592, '10.00e-6', 'end');
  for (let f = 4; f < 26; f += 2) s += text(X(f), 600, f.toFixed(2), 'mid') + line(X(f), f % 10 ? 588 : 582, X(f), 592, '#777');
  s += text(329, 600, '2.00', 'mid') + text(721, 600, '26.00', 'mid') + text(526, 609, 'Hz', 'mid');
  s += `<text transform="translate(289 360) rotate(-90)">g/N • Log</text>`;

  const teal = '325.5,471 329,456 333,420 337,393 339.5,360 342,359 345,353 348,346 350,332 353,295 354.5,268 357,281 360,283 362,265 364.5,238 367,255 371,300 376,336 380,342 384,330 387,305 390,298 393,310 397,345 401,375 405,390 409,399 412,397 416,396 420,399 425,399 430,388 435,374 440,352 445,330 449,305 453,280 457,269 461,263 466,250 473,240 478,237 483,227 487,226 490,230 494,243 500,262 506,282 512,294 517,298 522,298.5 527,293 535,286 541,270 547,247 553,225 558,216 561,216 566,222 572,237 577,244 582,238 588,215 594,188 598,176 602,174 605,178 610,195 616,215 622,229 628,236 634,242 640,249 646,255 652,257 660,256 666,257 670,256 676,257 684,258 690,255 694,259 700,265 706,274 712,281 718,282 724.5,286';
  const gold = '325.5,547 331,510 335,440 338,375 340,345 342,369 345,378 347,370 350,330 353,295 354.5,268 357,281 360,283 362,265 364.5,238 367,255 371,300 376,336 380,342 384,330 387,305 390,298 393,310 397,345 401,375 405,395 409,401 413,392 416,386 419,395 423,404 427,403 433,384 438,362 445,330 449,305 453,280 457,269 461,263 466,250 473,240 478,237 483,227 487,226 490,229 494,242 500,261 506,281 512,293 517,297 522,298 529,293 535,287 541,271 547,248 553,226 558,215 561,215 566,222 572,236 577,245 582,238 588,214 594,187 598,176 602,173 605,177 610,194 616,214 622,229 628,236 634,242 640,250 646,256 652,258 660,254 666,256 670,257 676,256 684,262 690,256 694,258 700,271 706,283 712,292 718,296 724.5,299';
  s += curve(teal, '#1b6f88', 1.4) + curve(gold, '#dcb640', 1.3);

  const R = (a, b) => Array.from({ length: a - b + 1 }, (_, i) => a - i);
  const all = R(100, 39);
  const poles = [
    [2.9769, '#10588c', R(99, 92), [100], [68, 66]],
    [3.9012, '#8a9248', [...R(100, 49), ...R(44, 39)], [74], [48]],
    [4.4621, '#8c2f4f', all, [70], []],
    [5.9519, '#1f4a50', all, [83], []],
    [7.3827, '#96663e', R(100, 42), [71], [40]],
    [8.4734, '#27304e', [...R(100, 75), ...R(73, 57), 55, ...R(53, 49)], [86], [46]],
    [9.8232, '#2d6e50', all, [65], []],
    [10.3382, '#8b6888', [...R(100, 76), ...R(74, 58)], [77], [53]],
    [10.8556, '#7c5a5c', all, [67], []],
    [11.5213, '#2f7f80', all, [68], []],
    [11.9298, '#1f6f8e', R(100, 70), [85], [68, 66, 55]],
    [12.0640, '#b0bb58', [...R(100, 62), 60, 59, 58, 57, 55, 53, 52, 51, 48, 46, 44, 43, 41, 40, 39], [73], []],
    [13.7023, '#c05064', all, [74], []],
    [14.1028, '#3f6f7a', [...R(100, 55), 51, 49, 48, 45, 44, 43, 40], [64], []],
    [16.0242, '#c08048', [...R(100, 49), 46, 45], [92], [41, 40, 39]],
    [16.2379, '#6e4e6c', [...R(100, 74), 71, 67, 63, 61, 59, 57, 54, 51, 44], [60], []],
    [17.8155, '#4a9a70', [...R(100, 96), 94, 93, 92, 89, 88, 86, 85, 81, 80, 79], [95], [83, 77, 75, 74, 70, 69]],
    [18.3255, '#d29ab0', all, [83], []],
    [18.6901, '#5fa8a0', R(100, 54), [74, 49], []],
    [20.1566, '#3aa0bc', all, [59], []],
    [21.6172, '#bccf9a', all.filter(n => ![56, 50, 47].includes(n)), [96], []],
    [21.8171, '#d8a0b0', [...R(100, 82), ...R(80, 57), ...R(55, 48), 46, 45], [74], []],
    [23.0681, '#8fb0bc', all.filter(n => ![54, 50].includes(n)), [65], []],
    [23.9000, '#e0b898', all.filter(n => ![56, 50, 47].includes(n)), [87], []]
  ];
  const dot = (x, n, c) => `<circle cx="${x}" cy="${Y(n)}" r="2.7" fill="${c}"/>`;
  for (const [f, c, rows] of poles) {
    const x = X(f);
    s += line(x, 106, x, 592, '#8fe0de', 1.3);
    for (const n of rows) s += dot(x, n, c) + line(x, Y(n) - 1.3, x, Y(n) + 1.3, '#234', .8, 'opacity=".6"');
    s += line(x, 118, x, 592, '#35c4c4', .8, 'opacity=".45"');
  }
  for (const n of [72, 70, 68]) s += dot(564.2, n, '#c08048');
  for (const n of [51, 48, 45, 44, 43]) s += dot(605.7, n, '#8a9070');
  for (const [f, , , , black] of poles) for (const n of black) s += dot(X(f), n, '#173a44');
  for (const [x, n] of [[596.5, 100], [602.5, 100], [602.5, 99], [602.5, 98], [603, 90], [595.5, 71], [596, 68], [594.5, 55], [595, 51], [596, 45], [596, 43], [671.7, 94], [562, 40], ...[100, 99, 98, 96, 95, 94, 88, 87, 77, 62, 61].map(n => [722.3, n])]) s += dot(x, n, dark);
  s += line(473, 105, 473, 592, '#2c5f60', 2);
  for (const [f, , , crosses] of poles) for (const n of crosses) {
    const x = X(f), y = Y(n);
    s += dot(x, n, cyan) + line(x - 4, y - 4, x + 4, y + 4, cyan, 1.6) + line(x - 4, y + 4, x + 4, y - 4, cyan, 1.6);
  }
  s += flag(325.5, 100) + flag(473, 100) + flag(724.5, 100);
  s += tag(324.5, 583.5, 15, '2.15') + tag(472.5, 583.5, 18, '10.86') + tag(711, 583.5, 18.5, '25.70');
  for (const n of all) s += text(738.5, Y(n) + 2.5, n, 'rank mid');
  s += '<path d="M734 112h7l-3.500-7zM734 587h7l-3.500 7z" fill="#111"/>';
  $('stab').innerHTML = s;
}

/* Synthesis chart */
{
  const X = f => 813.3 + (f - 2.15) * 16.01;
  let s = '';
  for (let y = 137; y < 228; y += 4) s += line(814, y, 1195, y, '#ebebeb');
  for (let f = 4; f < 26; f += 2) s += line(X(f), 134, X(f), 260, '#e8e8e8') + text(X(f), 267.5, f.toFixed(2), 'mid');
  s += text(817, 267.5, '2.00', 'mid') + text(1186, 267.5, '26.00', 'mid') + text(1003, 275.5, 'Hz', 'mid');
  s += line(814, 244, 1195, 244, '#ddd') + line(814, 236, 1195, 236, '#ebebeb') + line(814, 252, 1195, 252, '#ebebeb');
  s += '<path d="M813.500 133.500H1195.500V260.500H813.500zM813.500 228.500H1195.500" fill="none" stroke="#888"/>';
  for (const [y, t] of [[140, '0.01'], [148, '4.00e-3'], [158, '2.00e-3'], [167.5, '1.00e-3'], [180, '400.00e-6'], [189.5, '200.00e-6'], [199.5, '100.00e-6'], [216, '30.00e-6'], [227, '10.00e-6'], [234.5, '180.00'], [246.5, '0.00'], [259, '-180.00']]) s += text(810.5, y, t, 'end') + line(811, y - 2.5, 814, y - 2.5, '#888');
  s += '<text transform="translate(777 194) rotate(-90)">g/N • Log</text><text transform="translate(787 258) rotate(-90)">° • Ph</text>';
  for (const f of [...modes.map(m => m[0]), 23.9]) s += line(X(f), 134, X(f), 260, '#999', 1, 'stroke-dasharray="7 3"') + flag(X(f), 127.5, '#888') + `<circle cx="${X(f)}" cy="259.500" r="1.2" fill="#444"/>`;
  s += `<g transform="translate(760 80) scale(.33333)">` +
    curve('160,355 172,345 182,330 195,325 205,325 220,305 235,290 245,284 256,300 263,288 271,265 283,292 295,332 311,352 322,325 333,298 344,285 354,298 366,322 382,345 398,350 412,340 425,343 445,328 460,315 495,294 530,280 555,262 578,245 590,248 605,244 620,234 632,234 650,257 670,282 690,304 712,308 732,303 740,298 760,287 785,266 805,247 822,240 840,243 870,254 895,248 915,238 935,234 952,240 970,260 990,283 1005,290 1030,295 1055,301 1075,296 1090,285 1120,285 1160,272 1205,266 1250,254 1290,244', '#1b6f88', 4.5) +
    curve('160,375 180,355 195,330 205,330 220,310 235,288 245,284 256,300 263,288 271,265 283,290 295,330 311,350 322,325 333,298 344,285 358,300 370,322 385,345 398,350 412,333 435,330 460,317 495,294 530,280 555,262 578,247 590,248 605,242 620,234 632,234 650,255 670,280 690,300 712,305 732,297 760,283 785,264 805,247 822,240 840,243 870,255 895,248 915,238 935,234 952,240 970,260 990,283 1005,292 1030,295 1055,301 1075,296 1090,285 1120,285 1160,272 1205,268 1250,258 1290,254', '#e2b93c', 4) +
    curve('160,492 175,490 195,492 205,495 235,493 250,508 265,505 278,523 295,528 310,512 325,502 340,512 355,526 375,522 395,512 412,508 435,500 465,497 500,495 540,495 565,498 578,502 605,510 630,520 655,526 685,526 715,512 735,505 790,500 820,508 850,512 915,510 940,520 960,528 1000,524 1040,517 1070,509 1110,506 1180,501 1240,498 1290,496', '#1b6f88', 4) +
    curve('160,490 175,492 195,490 205,495 235,493 250,510 265,503 278,523 295,528 310,512 325,502 340,512 355,526 375,524 395,512 412,510 435,506 465,499 500,496 540,496 565,498 578,503 605,512 630,520 655,527 685,526 715,512 735,506 790,500 820,508 850,512 915,510 940,520 960,528 1000,522 1040,514 1070,507 1110,504 1180,499 1240,497 1290,497', '#e2b93c', 4) + '</g>';
  s += line(813.5, 134, 813.5, 260, '#111', 1.5, 'stroke-dasharray="2 1.5"') + line(1190.3, 134, 1190.3, 260, '#111', 1.5, 'stroke-dasharray="2 1.5"') + line(952.7, 133, 952.7, 260, '#000', 1.6);
  s += flag(813.5, 127.5, '#111') + flag(952.7, 127.5, '#111') + flag(1190.3, 127.5, '#111');
  s += tag(812.5, 250.5, 15, '2.15') + tag(952.5, 247, 18, '10.86') + tag(1177, 250.5, 18, '25.70');
  $('synth').innerHTML = s;
}
```
